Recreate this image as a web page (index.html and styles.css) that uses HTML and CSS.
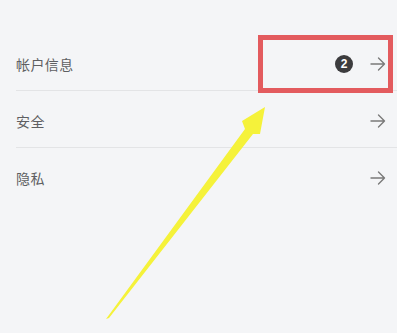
FILE: index.html
```html
<!DOCTYPE html>
<html lang="zh">
<head>
<meta charset="utf-8">
<link rel="stylesheet" href="styles.css">
</head>
<body>
<div class="page">
  <ul class="list">
    <li class="row">
      <span class="label">帐户信息</span>
      <span class="right">
        <span class="badge">2</span>
        <svg class="go" viewBox="0 0 16 14" width="16" height="14"><path d="M1 7H14.5M8.5 1L14.5 7L8.5 13" fill="none" stroke="#7a7a7a" stroke-width="1.4" stroke-linecap="round" stroke-linejoin="round"/></svg>
      </span>
    </li>
    <li class="row">
      <span class="label">安全</span>
      <span class="right">
        <svg class="go" viewBox="0 0 16 14" width="16" height="14"><path d="M1 7H14.5M8.5 1L14.5 7L8.5 13" fill="none" stroke="#7a7a7a" stroke-width="1.4" stroke-linecap="round" stroke-linejoin="round"/></svg>
      </span>
    </li>
    <li class="row last">
      <span class="label">隐私</span>
      <span class="right">
        <svg class="go" viewBox="0 0 16 14" width="16" height="14"><path d="M1 7H14.5M8.5 1L14.5 7L8.5 13" fill="none" stroke="#7a7a7a" stroke-width="1.4" stroke-linecap="round" stroke-linejoin="round"/></svg>
      </span>
    </li>
  </ul>
  <div class="highlight"></div>
  <svg class="pointer" viewBox="0 0 397 333" width="397" height="333">
    <polygon points="106,319 245,129 242,121 265,107 260,134 253,134 109,318" fill="#f5f23a"/>
  </svg>
</div>
</body>
</html>
```
FILE: styles.css
```css
html, body {
  margin: 0;
  padding: 0;
  background: #f4f5f7;
}
.page {
  position: relative;
  width: 397px;
  height: 333px;
  overflow: hidden;
  font-family: "Noto Sans CJK SC", "Noto Sans", sans-serif;
}
.list {
  list-style: none;
  margin: 0;
  padding: 34px 0 0 0;
}
.row {
  display: flex;
  align-items: center;
  justify-content: space-between;
  box-sizing: border-box;
  height: 57px;
  padding-top: 3px;
  margin-left: 16px;
  padding-right: 11px;
  border-bottom: 1px solid #e3e4e6;
}
.row.last {
  border-bottom: none;
}
.label {
  font-size: 14px;
  color: #5e5f62;
  letter-spacing: 0.4px;
}
.right {
  display: flex;
  align-items: center;
  gap: 17px;
}
.badge {
  width: 18px;
  height: 18px;
  border-radius: 50%;
  background: #3c3c3e;
  color: #fff;
  font-size: 12px;
  font-weight: 700;
  font-family: "Liberation Sans", sans-serif;
  display: flex;
  align-items: center;
  justify-content: center;
}
.go {
  display: block;
}
.highlight {
  position: absolute;
  left: 258px;
  top: 35px;
  width: 125px;
  height: 48px;
  border: 5px solid #e35b5e;
}
.pointer {
  position: absolute;
  left: 0;
  top: 0;
}
```
